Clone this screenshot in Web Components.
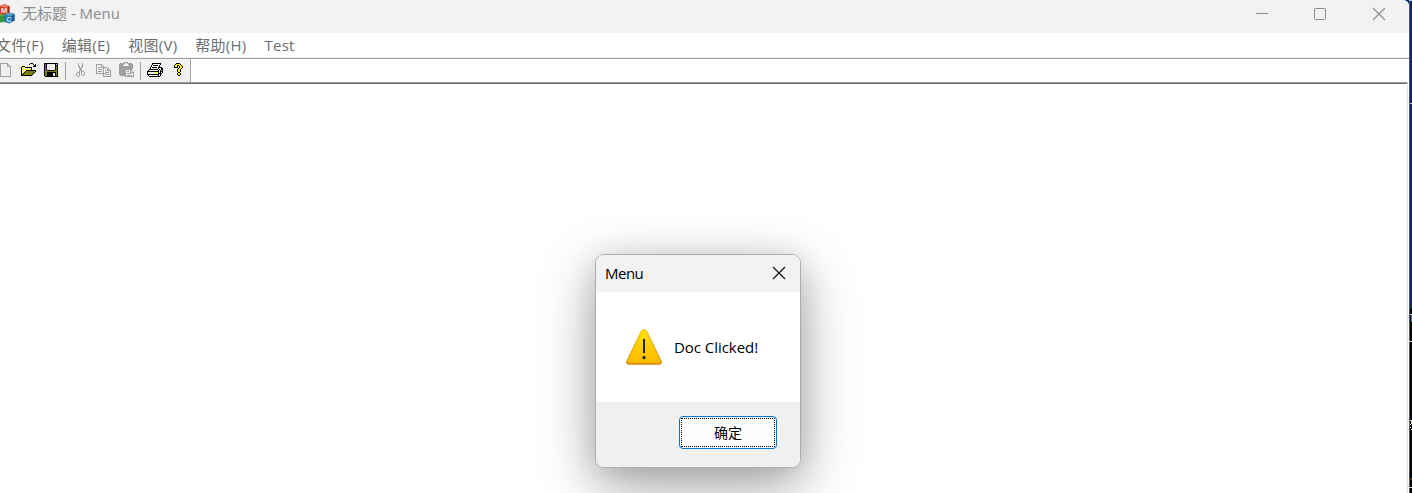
<!DOCTYPE html>
<html lang="zh">
<head>
<meta charset="utf-8">
<title>Menu</title>
<style>
html,body{margin:0;width:1412px;height:493px;overflow:hidden;background:#fff}
body{font-family:"Open Sans","Noto Sans CJK SC",sans-serif}
</style>
</head>
<body>
<app-shell></app-shell>
<script>
const define=(name,html,after)=>customElements.define(name,class extends HTMLElement{
  connectedCallback(){
    if(this.shadowRoot)return;
    const t=document.createElement('template');t.innerHTML=html;
    this.attachShadow({mode:'open'}).append(t.content.cloneNode(true));
    if(after)after(this);
  }
});

/* Toolbar bitmaps: one character per pixel. */
const ICONS={
new:`
gggggggg....
g......gg...
g......g.g..
g......gggg.
g.........g.
g.........g.
g.........g.
g.........g.
g.........g.
g.........g.
g.........g.
g.........g.
g.........g.
ggggggggggg.`,
open:`
.........kkk....
........k...k.k.
.............kk.
.kkk........kkk.
kywykkkkkkk.....
kwywywywywk.....
kywywywywyk.....
kwywykkkkkkkkkk.
kywykoooooooook.
kwykoooooooook..
kykoooooooook...
kkoooooooook....
kkkkkkkkkkk.....`,
save:`
kkkkkkkkkkkkkk
koknnnnnnnnknk
koknnnnnnnnkkk
koknnnnnnnnkok
koknnnnnnnnkok
koknnnnnnnnkok
koknnnnnnnnkok
kookkkkkkkkook
kooooooooooook
kookkkkkkkkkok
kookkkkkknnkok
kookkkkkknnkok
kookkkkkknnkok
.kkkkkkkkkkkkk`,
cut:`
..g...g..
..g...g..
..g...g..
..gg.gg..
...g.g...
...ggg...
....g....
...ggg...
...g.ggg.
.ggg.g..g
g..g.g..g
g..g.g..g
g..g..gg.
.gg......`,
copy:`
gggggg.........
g....gg........
g....g.g.......
g.gg.gggggg....
g......g...gg..
g.gggg.g...g.g.
g......g.g.gggg
g.gggg.g......g
g......g.gggg.g
ggggggggg.....g
.......g.gggg.g
.......g......g
.......gggggggg`,
paste:`
.....gggg......
.ggggg..ggggg..
ggggg....ggggg.
gggg......gggg.
gggggggggggggg.
gggggggggggggg.
gggggggggggggg.
ggggggggggggg..
ggggggg....gg..
ggggggg.gg.g.g.
ggggggg....gggg
ggggggg.gggg..g
ggggggg.......g
.gggggg.ggggg.g
......ggggggggg`,
print:`
.....kkkkkkkkk..
.....kwwwwwwwk..
....kwkkkkkwk...
....kwwwwwwwk...
...kwkkkkkwkkkk.
...kwwwwwwwknnkk
..kkkkkkkkknknkk
.knnnnnnnnnknknk
kkkkkkkkkkkknkkk
knnnnnnyyynknknk
knnnnnnnnnnkkkk.
kkkkkkkkkkkknk..
.knnnnnnnnnknk..
..kkkkkkkkkkk...`,
help:`
...kkkk...
..kyyyyk..
.kyykkyyk.
.kyyk.kyyk
.kkkk.kyyk
.....kyyk.
....kyyk..
....kyyk..
....kyyk..
.....kk...
....kyyk..
....kyyk..
.....kk...`
};
const INK={k:'#000',g:'#a0a0a0',y:'#ff0',w:'#fff',o:'#808000',n:'#f0f0f0'};

define('pixel-icon',`<style>:host{display:block;flex:none}svg{display:block;shape-rendering:crispEdges}</style>`,el=>{
  const rows=ICONS[el.getAttribute('name')].trim().split('\n');
  const w=Math.max(...rows.map(r=>r.length));
  let s='';
  rows.forEach((r,y)=>[...r].forEach((c,x)=>{if(INK[c])s+=`<rect x="${x}" y="${y}" width="1" height="1" fill="${INK[c]}"/>`}));
  const d=document.createElement('div');
  d.innerHTML=`<svg width="${w}" height="${rows.length}">${s}</svg>`;
  el.shadowRoot.append(d);
});

define('app-logo',`<style>:host{display:block;width:16px;height:22px}svg{display:block}text{font:bold 7.5px "Liberation Sans",sans-serif;fill:#f8e4de}</style>
<svg width="16" height="22" viewBox="0 0 16 22">
<path d="M-5 12L1 10L6 13V20L0 20.500L-5 19Z" fill="#39953c"/><path d="M-5 12L1 10L6 13L0 14Z" fill="#5fb058"/>
<path d="M-1 4L4.500 2L9.500 4V12L5 13L-1 12Z" fill="#d8432c"/><path d="M-1 4L4.500 2L9.500 4L6 5.500Z" fill="#e8806a"/><path d="M8 4.700L9.500 4V12L8 12.600Z" fill="#a82a1d"/>
<path d="M4.500 12.500L9.500 10.500L14.500 12V18.500L9.500 21.500L4.500 20Z" fill="#2878b8"/><path d="M4.500 12.500L9.500 10.500L14.500 12L10 14Z" fill="#5f9fd0"/><path d="M12.500 13L14.500 12V18.500L12.500 19.700Z" fill="#15548c"/>
<text x="1" y="11">M</text><text x="6.500" y="19.500" style="font-size:6.5px;fill:#d9ebf7">C</text></svg>`);

define('title-bar',`<style>
:host{display:flex;height:33px;background:#f2f2f2;color:#8b8b8b}
app-logo{margin-top:2px}
.t{margin-left:6px;font-size:15px;line-height:27px;white-space:pre;flex:1}
svg{display:block;margin-top:7px}
</style><app-logo></app-logo><span class="t"><slot></slot></span>
<svg width="153" height="14" fill="none" stroke="#8b8b8b"><path d="M0 6.500H12"/><rect x="58.500" y="1.500" width="11" height="11" rx="1"/><path d="M117 1L129 13M129 1L117 13" stroke-width="1.100"/></svg>`);

define('menu-item',`<style>:host{display:block;white-space:pre}</style><slot></slot>`);
define('menu-bar',`<style>:host{display:flex;gap:18px;height:24px;margin-left:-4px;background:#fff;color:#6d6d6d;font-size:15px;letter-spacing:.25px;line-height:25px}</style><slot></slot>`);

define('tool-bar',`<style>
:host{display:block;border-top:1px solid #f0f0f0}
.line{border-top:1px solid #a0a0a0;height:23px;background:#fff}
.band{display:flex;width:190px;height:23px;background:#f0f0f0;border-right:1px solid #a0a0a0}
.b{width:23px;flex:none;display:flex;box-sizing:border-box}
i{width:1px;height:18px;margin-top:3px;background:#a0a0a0;flex:none}
</style><div class="line"><div class="band">
<div class="b" style="width:21px;padding-top:4px"><pixel-icon name="new"></pixel-icon></div>
<div class="b" style="padding-top:4px"><pixel-icon name="open"></pixel-icon></div>
<div class="b" style="width:21px;padding-top:4px"><pixel-icon name="save"></pixel-icon></div>
<i></i>
<div class="b" style="width:30px;padding:4px 0 0 10px"><pixel-icon name="cut"></pixel-icon></div>
<div class="b" style="padding-top:5px"><pixel-icon name="copy"></pixel-icon></div>
<div class="b" style="width:21px;padding-top:3px"><pixel-icon name="paste"></pixel-icon></div>
<i></i>
<div class="b" style="width:32px;padding:4px 0 0 6px"><pixel-icon name="print"></pixel-icon></div>
<div class="b" style="width:17px;padding-top:4px"><pixel-icon name="help"></pixel-icon></div>
</div></div>`);

define('app-window',`<style>
:host{display:flex;flex-direction:column;width:1409px;height:493px;background:#fff;border-top-right-radius:6px;overflow:hidden}
.client{flex:1;margin-right:1px;border-top:1px solid #a0a0a0;border-right:1px solid #e3e3e3;display:flex;flex-direction:column}
.client::before{content:"";height:1px;background:#696969}
</style><slot></slot><div class="client"></div>`);

define('desktop-edge',`<style>
:host{display:block;width:3px;height:493px}svg{display:block}
</style><svg width="3" height="493" shape-rendering="crispEdges"><path d="M0 0H3V309H0Z" fill="#00286b"/><path d="M0 309H3V493H0Z" fill="#000"/><path d="M0 0H1V493H0Z" fill="#55575c"/>
<path d="M0 0H3V1H0ZM1 103H3V104H1Z" fill="#b7d6ee"/><path d="M1 314H3V315H1ZM0 341H3V342H0ZM1 420H3V421H1ZM2 421H3V424H2ZM1 424H2V425H1ZM1 427H2V428H1ZM2 429H3V430H2ZM0 487H3V488H0Z" fill="#e8e4d8"/><path d="M2 315H3V322H2Z" fill="#2788d0"/><path d="M1 478H3V480H1Z" fill="#4a2618"/></svg>`);

define('warning-icon',`<style>:host{display:block}svg{display:block}</style>
<svg width="38" height="38" viewBox="0 0 38 38"><defs><linearGradient id="g" x2="0" y2="1"><stop stop-color="#ffe000"/><stop offset="1" stop-color="#ffb900"/></linearGradient><linearGradient id="s" x2="0" y2="1"><stop stop-color="#f5c800"/><stop offset="1" stop-color="#d98b08"/></linearGradient></defs>
<path d="M16 2.800Q19 -.8 22 2.800L36.700 33Q37.600 36.300 34.500 36.800H3.500Q.4 36.300 1.300 33Z" fill="url(#s)"/><path d="M17 3.500Q19 1.200 21 3.500L35.400 32.800Q35.800 34.800 34 35.100H4Q2.200 34.800 2.600 32.800Z" fill="url(#g)"/>
<path d="M19 11V25" stroke="#181818" stroke-width="1.900"/><circle cx="19" cy="29.600" r="1.600" fill="#181818"/></svg>`);

define('dialog-button',`<style>
:host{display:block;box-sizing:border-box;width:98px;height:33px;border:1px solid #0078d4;border-radius:4px;background:#fdfdfd;padding:1px}
div{box-sizing:border-box;height:29px;border:1px dotted #000;text-align:center;font-size:14px;line-height:28px;color:#000}
</style><div><slot></slot></div>`);

define('message-box',`<style>
:host{position:absolute;left:595px;top:254px;box-sizing:border-box;width:206px;height:214px;border:1px solid #adadad;border-radius:9px;background:#fff;box-shadow:0 18px 56px rgba(0,0,0,.34),0 4px 30px rgba(0,0,0,.12);color:#000;font-size:15px}
.in{display:flex;flex-direction:column;height:100%;border-radius:8px;overflow:hidden}
.head{display:flex;justify-content:space-between;height:37px;background:#f2f2f2;padding:0 14px 0 9px;line-height:37px;letter-spacing:-.5px}
.head svg{margin-top:11px}
.body{display:flex;height:110px;padding-left:29px}
.body warning-icon{margin-top:36px}
.body span{margin-left:11px;line-height:111px;white-space:pre;letter-spacing:-.05px}
.foot{flex:1;background:#f0f0f0;display:flex;justify-content:flex-end;padding:14px 23px 0 0}
</style><div class="in"><div class="head"><span><slot name="title"></slot></span><svg width="14" height="14"><path d="M1 1L13 13M13 1L1 13" fill="none" stroke="#111" stroke-width="1.200"/></svg></div>
<div class="body"><warning-icon></warning-icon><span><slot></slot></span></div>
<div class="foot"><dialog-button>确定</dialog-button></div></div>`);

define('app-shell',`<style>:host{display:flex;position:relative;width:1412px;height:493px;background:#00286b;overflow:hidden}</style>
<app-window><title-bar>无标题 - Menu</title-bar>
<menu-bar><menu-item>文件(F)</menu-item><menu-item>编辑(E)</menu-item><menu-item>视图(V)</menu-item><menu-item>帮助(H)</menu-item><menu-item>Test</menu-item></menu-bar>
<tool-bar></tool-bar></app-window><desktop-edge></desktop-edge>
<message-box><span slot="title">Menu</span>Doc Clicked!</message-box>`);
</script>
</body>
</html>
